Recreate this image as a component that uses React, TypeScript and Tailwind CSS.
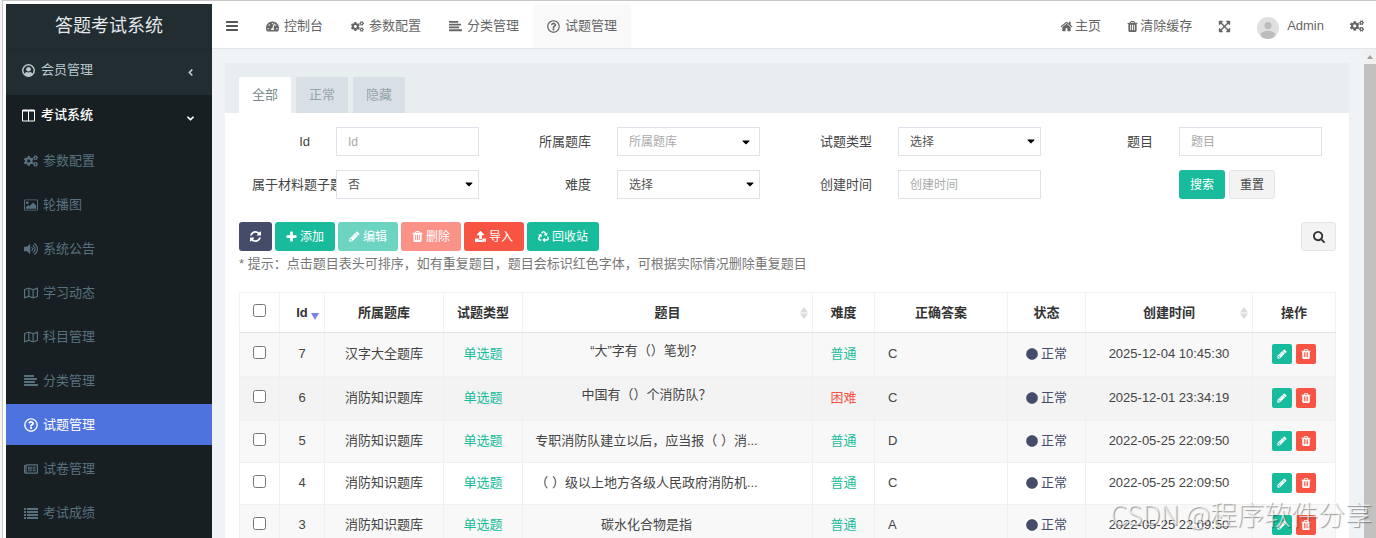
import React from "react";
import {
  FaAngleDown,
  FaAngleLeft,
  FaCaretDown,
  FaCircle,
  FaCogs,
  FaExpandArrowsAlt,
  FaRecycle,
  FaRegMap,
  FaRegNewspaper,
  FaRegQuestionCircle,
  FaTachometerAlt,
  FaUpload,
  FaVolumeUp,
} from "react-icons/fa";

type IconProps = { className?: string };
type Icon = React.ComponentType<IconProps>;
type NavItem = { label: string; icon: Icon; active?: boolean };

type Question = {
  id: number;
  bank: string;
  title: string;
  hard?: boolean;
  answer: string;
  time: string;
  bg: string;
  tall?: boolean;
};

// Solid 1792-grid glyphs, heavier than the ones in the icon package
const glyph =
  (d: string, viewBox = "0 0 1792 1792"): Icon =>
  ({ className }) => (
    <svg viewBox={viewBox} className={className} fill="currentColor">
      <path d={d} />
    </svg>
  );

const Bars = glyph(
  "M1664 1344v128q0 26-19 45t-45 19h-1408q-26 0-45-19t-19-45v-128q0-26 19-45t45-19h1408q26 0 45 19t19 45zm0-512v128q0 26-19 45t-45 19h-1408q-26 0-45-19t-19-45v-128q0-26 19-45t45-19h1408q26 0 45 19t19 45zm0-512v128q0 26-19 45t-45 19h-1408q-26 0-45-19t-19-45v-128q0-26 19-45t45-19h1408q26 0 45 19t19 45z"
);
const AlignLeft = glyph(
  "M1792 1344v128q0 26-19 45t-45 19h-1664q-26 0-45-19t-19-45v-128q0-26 19-45t45-19h1664q26 0 45 19t19 45zm-384-384v128q0 26-19 45t-45 19h-1280q-26 0-45-19t-19-45v-128q0-26 19-45t45-19h1280q26 0 45 19t19 45zm256-384v128q0 26-19 45t-45 19h-1536q-26 0-45-19t-19-45v-128q0-26 19-45t45-19h1536q26 0 45 19t19 45zm-384-384v128q0 26-19 45t-45 19h-1152q-26 0-45-19t-19-45v-128q0-26 19-45t45-19h1152q26 0 45 19t19 45z"
);
const Trash = glyph(
  "M704 1376v-704q0-14-9-23t-23-9h-64q-14 0-23 9t-9 23v704q0 14 9 23t23 9h64q14 0 23-9t9-23zm256 0v-704q0-14-9-23t-23-9h-64q-14 0-23 9t-9 23v704q0 14 9 23t23 9h64q14 0 23-9t9-23zm256 0v-704q0-14-9-23t-23-9h-64q-14 0-23 9t-9 23v704q0 14 9 23t23 9h64q14 0 23-9t9-23zm-544-992h448l-48-117q-7-9-17-11h-317q-10 2-17 11zm928 32v64q0 14-9 23t-23 9h-96v948q0 83-47 143.5t-113 60.5h-832q-66 0-113-58.5t-47-141.5v-952h-96q-14 0-23-9t-9-23v-64q0-14 9-23t23-9h309l70-167q15-37 54-63t79-26h320q40 0 79 26t54 63l70 167h309q14 0 23 9t9 23z",
  "128 128 1536 1536"
);
const Pencil = glyph(
  "M491 1536l91-91-235-235-91 91v107h128v128h107zm523-928q0-22-22-22-10 0-17 7l-542 542q-7 7-7 17 0 22 22 22 10 0 17-7l542-542q7-7 7-17zm-54-192l416 416-832 832h-416v-416zm683 96q0 53-37 90l-166 166-416-416 166-165q36-38 90-38 53 0 91 38l235 234q37 39 37 91z",
  "64 64 1664 1664"
);
const Columns = glyph(
  "M160 1408h608v-1152h-640v1120q0 13 9.5 22.5t22.5 9.5zm1376-32v-1120h-640v1152h608q13 0 22.5-9.5t9.5-22.5zm128-1216v1216q0 66-47 113t-113 47h-1344q-66 0-113-47t-47-113v-1216q0-66 47-113t113-47h1344q66 0 113 47t47 113z",
  "0 -64 1664 1664"
);
const Home = glyph(
  "M1472 992v480q0 26-19 45t-45 19h-384v-384h-256v384h-384q-26 0-45-19t-19-45v-480q0-1 .5-3t.5-3l575-474 575 474q1 2 1 6zm223-69l-62 74q-8 9-21 11h-3q-13 0-21-7l-692-577-692 577q-12 8-24 7-13-2-21-11l-62-74q-8-10-7-23.5t11-21.5l719-599q32-26 76-26t76 26l244 204v-195q0-14 9-23t23-9h192q14 0 23 9t9 23v408l219 182q10 8 11 21.5t-7 23.5z"
);
const Plus = glyph(
  "M1600 736v192q0 40-28 68t-68 28h-416v416q0 40-28 68t-68 28h-192q-40 0-68-28t-28-68v-416h-416q-40 0-68-28t-28-68v-192q0-40 28-68t68-28h416v-416q0-40 28-68t68-28h192q40 0 68 28t28 68v416h416q40 0 68 28t28 68z",
  "128 64 1536 1536"
);
const Search = glyph(
  "M1216 832q0-185-131.5-316.5t-316.5-131.5-316.5 131.5-131.5 316.5 131.5 316.5 316.5 131.5 316.5-131.5 131.5-316.5zm512 832q0 52-38 90t-90 38q-54 0-90-38l-343-342q-179 124-399 124-143 0-273.5-55.5t-225-150-150-225-55.5-273.5 55.5-273.5 150-225 225-150 273.5-55.5 273.5 55.5 225 150 150 225 55.5 273.5q0 220-124 399l343 343q37 37 37 90z",
  "64 128 1664 1664"
);
const Refresh = glyph(
  "M1639 1056q0 5-1 7-64 268-268 434.5t-478 166.5q-146 0-282.5-55t-243.5-157l-129 129q-19 19-45 19t-45-19-19-45v-448q0-26 19-45t45-19h448q26 0 45 19t19 45-19 45l-137 137q71 66 161 102t187 36q134 0 250-65t186-179q11-17 53-117 8-23 30-23h192q13 0 22.5 9.5t9.5 22.5zm25-800v448q0 26-19 45t-45 19h-448q-26 0-45-19t-19-45 19-45l138-138q-148-137-349-137-134 0-250 65t-186 179q-11 17-53 117-8 23-30 23h-199q-13 0-22.5-9.5t-9.5-22.5v-7q65-268 270-434.5t480-166.5q146 0 284 55.5t245 156.5l130-129q19-19 45-19t45 19 19 45z",
  "128 128 1536 1536"
);
const Picture = glyph(
  "M576 576q0 80-56 136t-136 56-136-56-56-136 56-136 136-56 136 56 56 136zm1024 384v448h-1408v-192l320-320 160 160 512-512zm96-704h-1600q-13 0-22.5 9.5t-9.5 22.5v1216q0 13 9.5 22.5t22.5 9.5h1600q13 0 22.5-9.5t9.5-22.5v-1216q0-13-9.5-22.5t-22.5-9.5zm160 32v1216q0 66-47 113t-113 47h-1600q-66 0-113-47t-47-113v-1216q0-66 47-113t113-47h1600q66 0 113 47t47 113z",
  "-64 -64 1920 1920"
);
const List = glyph("M0 2h2v2H0zM3 2h11v2H3zM0 5h2v2H0zM3 5h11v2H3zM0 8h2v2H0zM3 8h11v2H3zM0 11h2v2H0zM3 11h11v2H3z", "0 0 14 14");

const UserCircle: Icon = ({ className }) => (
  <svg viewBox="0 0 14 14" className={className} fill="currentColor">
    <circle cx="7" cy="7" r="6.2" fill="none" stroke="currentColor" strokeWidth="1.6" />
    <circle cx="7" cy="5.6" r="2.5" />
    <path d="M2.6 11.4c.5-2 1.5-2.8 2.6-2.8.9.6 2.700.6 3.600 0 1.100 0 2.100.8 2.600 2.800C10.200 12.700 8.600 13.300 7 13.300s-3.200-.6-4.400-1.900z" />
  </svg>
);

const subMenu: NavItem[] = [
  { label: "参数配置", icon: FaCogs },
  { label: "轮播图", icon: Picture },
  { label: "系统公告", icon: FaVolumeUp },
  { label: "学习动态", icon: FaRegMap },
  { label: "科目管理", icon: FaRegMap },
  { label: "分类管理", icon: AlignLeft },
  { label: "试题管理", icon: FaRegQuestionCircle, active: true },
  { label: "试卷管理", icon: FaRegNewspaper },
  { label: "考试成绩", icon: List },
];

const topTabs: NavItem[] = [
  { label: "控制台", icon: FaTachometerAlt },
  { label: "参数配置", icon: FaCogs },
  { label: "分类管理", icon: AlignLeft },
  { label: "试题管理", icon: FaRegQuestionCircle, active: true },
];

const questions: Question[] = [
  { id: 7, bank: "汉字大全题库", title: "“大”字有（）笔划？", answer: "C", time: "2025-12-04 10:45:30", bg: "bg-[#f8f8f8]", tall: true },
  { id: 6, bank: "消防知识题库", title: "中国有（）个消防队？", hard: true, answer: "C", time: "2025-12-01 23:34:19", bg: "bg-[#f3f3f3]", tall: true },
  { id: 5, bank: "消防知识题库", title: "专职消防队建立以后，应当报（ ）消...", answer: "D", time: "2022-05-25 22:09:50", bg: "bg-[#f8f8f8]" },
  { id: 4, bank: "消防知识题库", title: "（ ）级以上地方各级人民政府消防机...", answer: "C", time: "2022-05-25 22:09:50", bg: "bg-white" },
  { id: 3, bank: "消防知识题库", title: "碳水化合物是指", answer: "A", time: "2022-05-25 22:09:50", bg: "bg-[#f8f8f8]" },
];

const control =
  "block h-[29px] w-full appearance-none rounded-none border border-[#dfe2ea] bg-white px-[11px] text-[12px] text-[#555] outline-none placeholder:text-[#aaa]";

const Field: React.FC<{ id: string; label: string; children: React.ReactNode }> = ({ id, label, children }) => (
  <div className="flex items-center gap-[26px] px-[27px]">
    <label htmlFor={id} className="w-[58px] shrink-0 whitespace-nowrap text-right text-[#444]">
      {label}
    </label>
    <div className="relative min-w-0 flex-1">{children}</div>
  </div>
);

const Select: React.FC<{ id: string; value: string }> = ({ id, value }) => (
  <>
    <select id={id} className={control}>
      <option>{value}</option>
    </select>
    <FaCaretDown className="pointer-events-none absolute right-[4px] top-[8px] size-[12px] text-black" />
  </>
);

const ToolButton: React.FC<{ icon: Icon; label?: string; color: string; title?: string }> = ({
  icon: Icon,
  label,
  color,
  title,
}) => (
  <button
    type="button"
    title={title}
    className={`flex h-[29px] items-center gap-[3px] rounded-[3px] px-[11px] text-[12px] text-white ${color}`}
  >
    <Icon className="size-[11px]" />
    {label}
  </button>
);

const SortBoth = () => (
  <svg viewBox="0 0 8 14" className="absolute right-[4px] top-[13px] h-[14px] w-[8px]" fill="#dcdcdc">
    <path d="M4 1 8 6.500H0zM4 13 0 7.500h8z" />
  </svg>
);

const Sidebar = () => (
  <aside className="w-[206px] shrink-0 overflow-hidden bg-[#181f23] text-[13px]">
    <div className="bg-[#222d32]">
      <h1 className="flex h-[46px] items-center justify-center border-b border-[#1f292e] text-[18px] text-[#e4e8ea]">
        答题考试系统
      </h1>
      <a href="#member" className="flex h-[45px] items-center gap-[6px] px-4 pb-[5px] text-[#b8c7ce]">
        <UserCircle className="size-[13px]" />
        <span className="flex-1">会员管理</span>
        <FaAngleLeft className="mt-[5px] size-[11px]" />
      </a>
    </div>
    <a href="#exam" className="flex h-[40px] items-center gap-[6px] px-4 font-medium text-white">
      <Columns className="size-[13px]" />
      <span className="flex-1">考试系统</span>
      <FaAngleDown className="mt-[6px] size-[11px]" />
    </a>
    <ul className="flex flex-col gap-[3px] pt-[5px]">
      {subMenu.map(({ label, icon: Icon, active }) => (
        <li key={label}>
          <a
            href="#sub"
            className={`flex h-[41px] items-center gap-[5px] px-[18px] ${
              active ? "bg-[#4e73df] text-white" : "text-[#57717d]"
            }`}
          >
            <Icon className="size-[14px]" />
            {label}
          </a>
        </li>
      ))}
    </ul>
  </aside>
);

const Topbar = () => (
  <header className="flex h-[45px] shrink-0 border-b border-[#e2e6e9] bg-white text-[13px] text-[#666]">
    <button type="button" title="菜单" className="px-[13px]">
      <Bars className="size-[14px] text-[#555]" />
    </button>
    <nav className="flex">
      {topTabs.map(({ label, icon: Icon, active }) => (
        <a
          key={label}
          href="#tab"
          className={`flex items-center gap-[5px] px-[14px] ${active ? "bg-[#f9f9f9]" : ""}`}
        >
          <Icon className="size-[13px]" />
          {label}
        </a>
      ))}
    </nav>
    <div className="ml-auto flex items-center gap-[26px] pr-3">
      <a href="#home" className="flex items-center gap-[2px]">
        <Home className="size-[13px]" />
        主页
      </a>
      <a href="#cache" className="flex items-center gap-[2px]">
        <Trash className="size-[11px]" />
        清除缓存
      </a>
      <button type="button" title="全屏">
        <FaExpandArrowsAlt className="size-[13px]" />
      </button>
      <a href="#admin" className="flex items-center gap-[8px]">
        <svg viewBox="0 0 22 22" className="mt-[3px] size-[22px]">
          <clipPath id="face">
            <circle cx="11" cy="11" r="11" />
          </clipPath>
          <g clipPath="url(#face)">
            <rect width="22" height="22" fill="#e0e0e0" />
            <circle cx="11" cy="8.5" r="3.6" fill="#bdbdbd" />
            <ellipse cx="11" cy="18" rx="7.4" ry="4.2" fill="#bdbdbd" />
          </g>
        </svg>
        Admin
      </a>
      <button type="button" title="设置">
        <FaCogs className="size-[14px]" />
      </button>
    </div>
  </header>
);

const SearchForm = () => (
  <form className="grid grid-cols-4 gap-y-[14px] pt-[14px] text-[13px]">
    <Field id="qid" label="Id">
      <input id="qid" placeholder="Id" className={control} />
    </Field>
    <Field id="bank" label="所属题库">
      <input id="bank" placeholder="所属题库" className={control} />
      <FaCaretDown className="pointer-events-none absolute right-[8px] top-[9px] size-[12px] text-black" />
    </Field>
    <Field id="kind" label="试题类型">
      <Select id="kind" value="选择" />
    </Field>
    <Field id="title" label="题目">
      <input id="title" placeholder="题目" className={control} />
    </Field>
    <Field id="material" label="属于材料题子题">
      <Select id="material" value="否" />
    </Field>
    <Field id="level" label="难度">
      <Select id="level" value="选择" />
    </Field>
    <Field id="created" label="创建时间">
      <input id="created" placeholder="创建时间" className={control} />
    </Field>
    <div className="flex gap-1 pl-[111px] text-[12px]">
      <button type="button" className="h-[29px] rounded-[3px] bg-[#18bc9c] px-[11px] text-white">
        搜索
      </button>
      <button type="button" className="h-[29px] rounded-[3px] border border-[#e6e6e6] bg-[#f3f3f3] px-[10px] text-[#444]">
        重置
      </button>
    </div>
  </form>
);

const th = "relative border border-[#f2f2f2] border-b-[#e2e2e2] font-bold text-[#333]";
const td = "border border-[#f0f0f0] pb-[2px] text-center";

const QuestionTable = () => (
  <table className="mt-[18px] w-full table-fixed border-collapse text-[13px] text-[#444]">
    <colgroup>
      <col className="w-[40px]" />
      <col className="w-[45px]" />
      <col className="w-[119px]" />
      <col className="w-[79px]" />
      <col />
      <col className="w-[62px]" />
      <col className="w-[133px]" />
      <col className="w-[78px]" />
      <col className="w-[167px]" />
      <col className="w-[83px]" />
    </colgroup>
    <thead>
      <tr className="h-[40px]">
        <th className={th}>
          <input type="checkbox" aria-label="全选" className="mx-auto mb-1 block size-[13px]" />
        </th>
        <th className={th}>
          Id
          <svg viewBox="0 0 8 7" className="absolute right-[5px] top-[20px] h-[7px] w-[8px]" fill="#7b83e3">
            <path d="M0 0h8L4 7z" />
          </svg>
        </th>
        <th className={th}>所属题库</th>
        <th className={th}>试题类型</th>
        <th className={th}>
          题目
          <SortBoth />
        </th>
        <th className={th}>难度</th>
        <th className={th}>正确答案</th>
        <th className={th}>状态</th>
        <th className={th}>
          创建时间
          <SortBoth />
        </th>
        <th className={th}>操作</th>
      </tr>
    </thead>
    <tbody>
      {questions.map((q) => (
        <tr key={q.id} className={`${q.bg} ${q.tall ? "h-[44px]" : "h-[42px]"}`}>
          <td className={td}>
            <input type="checkbox" aria-label={`选择 ${q.id}`} className="mx-auto mb-[2px] block size-[13px]" />
          </td>
          <td className={td}>{q.id}</td>
          <td className={td}>{q.bank}</td>
          <td className={`${td} text-[#18bc9c]`}>单选题</td>
          <td className={td}>
            <div className={`mr-[46px] whitespace-nowrap pl-1 ${q.tall ? "pb-[6px]" : ""}`}>{q.title}</div>
          </td>
          <td className={`${td} ${q.hard ? "text-[#f75444]" : "text-[#18bc9c]"}`}>{q.hard ? "困难" : "普通"}</td>
          <td className={`${td} pl-[13px] text-left!`}>{q.answer}</td>
          <td className={`${td} text-[#444c69]`}>
            <span className="flex items-center justify-center gap-[3px]">
              <FaCircle className="size-[12px]" />
              正常
            </span>
          </td>
          <td className={td}>{q.time}</td>
          <td className={td}>
            <div className="flex justify-center gap-1">
              <button type="button" title="编辑" className="rounded-[2px] bg-[#18bc9c] p-[5px] text-white">
                <Pencil className="size-[10px]" />
              </button>
              <button type="button" title="删除" className="rounded-[2px] bg-[#f75444] p-[5px] text-white">
                <Trash className="size-[10px]" />
              </button>
            </div>
          </td>
        </tr>
      ))}
    </tbody>
  </table>
);

const Panel = () => (
  <section className="min-w-0 flex-1 bg-white">
    <div className="flex h-[50px] items-end gap-[5px] bg-[#e8edf0] px-[14px] text-[13px]">
      <button type="button" className="h-[36px] rounded-t-[2px] bg-white px-[13px] text-[#7b8a8b]">
        全部
      </button>
      <button type="button" className="h-[36px] rounded-t-[2px] bg-[#d8dfe5] px-[13px] text-[#95a5a6]">
        正常
      </button>
      <button type="button" className="h-[36px] rounded-t-[2px] bg-[#d8dfe5] px-[13px] text-[#95a5a6]">
        隐藏
      </button>
    </div>
    <SearchForm />
    <div className="pl-[14px] pr-[13px] pt-[23px]">
      <div className="flex gap-[3px]">
        <ToolButton icon={Refresh} title="刷新" color="bg-[#444c69]" />
        <ToolButton icon={Plus} label="添加" color="bg-[#18bc9c]" />
        <ToolButton icon={Pencil} label="编辑" color="bg-[#6cd4c0]" />
        <ToolButton icon={Trash} label="删除" color="bg-[#fa9288]" />
        <ToolButton icon={FaUpload} label="导入" color="bg-[#f75444]" />
        <ToolButton icon={FaRecycle} label="回收站" color="bg-[#18bc9c]" />
        <button
          type="button"
          title="搜索"
          className="ml-auto flex h-[29px] w-[35px] items-center justify-center rounded-[3px] border border-[#e6e6e6] bg-[#f3f3f3]"
        >
          <Search className="size-[12px] text-[#333]" />
        </button>
      </div>
      <p className="mt-[3px] text-[13px] leading-[20px] text-[#777]">
        * 提示：点击题目表头可排序，如有重复题目，题目会标识红色字体，可根据实际情况删除重复题目
      </p>
      <QuestionTable />
    </div>
  </section>
);

export default function App() {
  return (
    <div className="relative h-screen overflow-hidden bg-[#f4f4f4] pl-[2px] font-['Liberation_Sans','Noto_Sans_CJK_SC',sans-serif]">
      <div className="flex h-full border-l border-t border-[#c8c8c8] bg-white pl-[3px] pt-[3px]">
        <Sidebar />
        <div className="flex min-w-0 flex-1 flex-col">
          <Topbar />
          <div className="flex min-h-0 flex-1 bg-[#eff3f6]">
            <main className="flex min-w-0 flex-1 pl-[13px] pr-[15px] pt-[14px]">
              <Panel />
            </main>
            {/* scroll track */}
            <div className="flex w-[12px] flex-col bg-[#f1f1f1]">
              <svg viewBox="0 0 12 15" className="h-[15px] w-[12px]" fill="#a0a0a0">
                <path d="M3 10h6L6 6z" />
              </svg>
              <div className="flex-1 bg-[#c1c1c1]" />
            </div>
          </div>
        </div>
      </div>
      <div className="pointer-events-none absolute bottom-[4px] right-[4px] font-['Noto_Sans_CJK_SC',sans-serif] text-[27px] font-light text-white/70 [text-shadow:1px_1px_1px_rgba(0,0,0,0.4)]">
        CSDN @程序软件分享
      </div>
    </div>
  );
}
